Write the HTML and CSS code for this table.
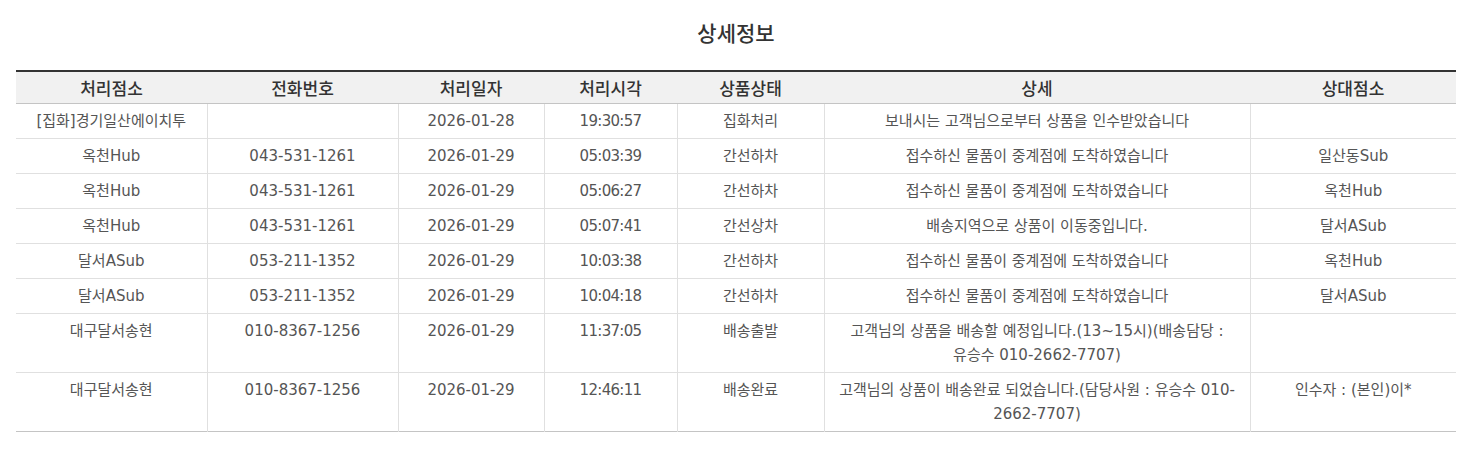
FILE: index.html
```html
<!DOCTYPE html>
<html lang="ko">
<head>
<meta charset="utf-8">
<link rel="stylesheet" href="styles.css">
</head>
<body>
<div class="wrap">
  <h2 class="title">상세정보</h2>
  <table class="detail">
    <colgroup>
      <col class="c1"><col class="c2"><col class="c3"><col class="c4"><col class="c5"><col class="c6"><col class="c7">
    </colgroup>
    <thead>
      <tr><th>처리점소</th><th>전화번호</th><th>처리일자</th><th>처리시각</th><th>상품상태</th><th>상세</th><th>상대점소</th></tr>
    </thead>
    <tbody>
      <tr><td>[집화]경기일산에이치투</td><td></td><td>2026-01-28</td><td class="time">19:30:57</td><td>집화처리</td><td>보내시는 고객님으로부터 상품을 인수받았습니다</td><td></td></tr>
      <tr><td>옥천Hub</td><td>043-531-1261</td><td>2026-01-29</td><td class="time">05:03:39</td><td>간선하차</td><td>접수하신 물품이 중계점에 도착하였습니다</td><td>일산동Sub</td></tr>
      <tr><td>옥천Hub</td><td>043-531-1261</td><td>2026-01-29</td><td class="time">05:06:27</td><td>간선하차</td><td>접수하신 물품이 중계점에 도착하였습니다</td><td>옥천Hub</td></tr>
      <tr><td>옥천Hub</td><td>043-531-1261</td><td>2026-01-29</td><td class="time">05:07:41</td><td>간선상차</td><td>배송지역으로 상품이 이동중입니다.</td><td>달서ASub</td></tr>
      <tr><td>달서ASub</td><td>053-211-1352</td><td>2026-01-29</td><td class="time">10:03:38</td><td>간선하차</td><td>접수하신 물품이 중계점에 도착하였습니다</td><td>옥천Hub</td></tr>
      <tr><td>달서ASub</td><td>053-211-1352</td><td>2026-01-29</td><td class="time">10:04:18</td><td>간선하차</td><td>접수하신 물품이 중계점에 도착하였습니다</td><td>달서ASub</td></tr>
      <tr><td>대구달서송현</td><td>010-8367-1256</td><td>2026-01-29</td><td class="time">11:37:05</td><td>배송출발</td><td>고객님의 상품을 배송할 예정입니다.(13~15시)(배송담당 : 유승수 010-2662-7707)</td><td></td></tr>
      <tr><td>대구달서송현</td><td>010-8367-1256</td><td>2026-01-29</td><td class="time">12:46:11</td><td>배송완료</td><td>고객님의 상품이 배송완료 되었습니다.(담당사원 : 유승수 010-2662-7707)</td><td>인수자 : (본인)이*</td></tr>
    </tbody>
  </table>
</div>
</body>
</html>
```
FILE: styles.css
```css
html, body {
  margin: 0;
  padding: 0;
  background: #fff;
}
body {
  font-family: "DejaVu Sans", "Noto Sans CJK KR", sans-serif;
  color: #555;
}
.wrap {
  padding: 0 28px 0 16px;
}
.title {
  margin: 0;
  padding-top: 17px;
  height: 70px;
  box-sizing: border-box;
  text-align: center;
  font-family: "Noto Sans CJK KR", sans-serif;
  font-size: 21px;
  line-height: 30px;
  font-weight: 500;
  color: #333;
}
.detail {
  width: 100%;
  border-collapse: collapse;
  table-layout: fixed;
  border-top: 2px solid #333;
  border-bottom: 1px solid #c4c4c4;
}
.c1 { width: 191px; }
.c2 { width: 191px; }
.c3 { width: 146px; }
.c4 { width: 133px; }
.c5 { width: 147px; }
.c6 { width: 426px; }
.c7 { width: auto; }
.detail th {
  background: #f1f1f1;
  height: 31px;
  padding: 0;
  font-family: "Noto Sans CJK KR", sans-serif;
  font-size: 17px;
  font-weight: 500;
  color: #333;
  text-align: center;
  vertical-align: middle;
  border-bottom: 1px solid #c4c4c4;
}
.detail td {
  padding: 5px 3px;
  font-size: 15px;
  line-height: 24px;
  color: #555;
  text-align: center;
  vertical-align: top;
  border-top: 1px solid #e0e0e0;
  border-left: 1px solid #e0e0e0;
  word-break: keep-all;
  overflow-wrap: break-word;
}
.detail td.time {
  letter-spacing: -0.7px;
}
.detail tbody tr:first-child td {
  border-top: none;
}
.detail td:first-child {
  border-left: none;
}
```
